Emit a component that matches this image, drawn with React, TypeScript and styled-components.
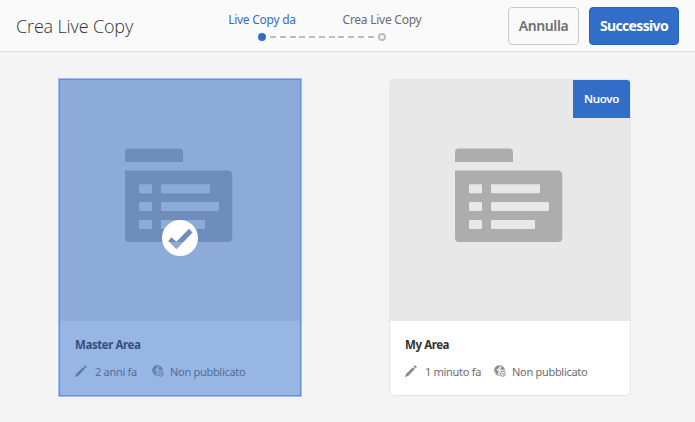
import React from "react";
import styled, { createGlobalStyle } from "styled-components";

const GlobalStyle = createGlobalStyle`
  *, *::before, *::after { box-sizing: border-box; }
  body { margin: 0; background: #f4f4f4; font-family: "Noto Sans", "Open Sans", sans-serif; overflow: hidden; }
`;

const Page = styled.div`
  width: 695px;
  height: 422px;
  background: #f4f4f4;
`;

const Header = styled.header`
  display: grid;
  grid-template-columns: 202px 240px 1fr;
  height: 52px;
  background: #fafafa;
  border-bottom: 1px solid #dcdcdc;
`;

const Title = styled.h1`
  margin: 0;
  padding: 13px 0 0 16px;
  font: 300 18px/27px "Open Sans", sans-serif;
  letter-spacing: -0.15px;
  color: #323232;
  white-space: nowrap;
`;

const Wizard = styled.ol`
  display: grid;
  grid-template-columns: 120px 120px;
  margin: 0;
  padding: 11px 0 0;
  list-style: none;
`;

const Step = styled.li<{ $active?: boolean }>`
  display: flex;
  flex-direction: column;
  align-items: center;
  font-size: 12px;
  line-height: 18px;
  letter-spacing: -0.25px;
  white-space: nowrap;
  color: ${(p) => (p.$active ? "#326ec8" : "#6b6b6b")};
`;

const StepTrack = styled.div`
  display: grid;
  grid-template-columns: 1fr 8px 1fr;
  align-items: center;
  width: 120px;
  height: 8px;
  margin-top: 4px;
`;

const Dot = styled.span<{ $active?: boolean }>`
  grid-column: 2;
  width: 8px;
  height: 8px;
  border-radius: 50%;
  border: 2px solid ${(p) => (p.$active ? "#326ec8" : "#bebebe")};
  background: ${(p) => (p.$active ? "#326ec8" : "#fafafa")};
`;

const Dashes = styled.span<{ $side: "before" | "after" }>`
  grid-row: 1;
  grid-column: ${(p) => (p.$side === "before" ? 1 : 3)};
  height: 2px;
  margin-left: ${(p) => (p.$side === "before" ? "0" : "4px")};
  margin-right: ${(p) => (p.$side === "before" ? "4px" : "0")};
  background: ${(p) =>
    p.$side === "before"
      ? "repeating-linear-gradient(90deg, #bebebe 0 2.85px, transparent 2.85px 6.62px, #bebebe 6.62px 9.77px)"
      : "repeating-linear-gradient(90deg, #bebebe 0 6px, transparent 6px 9.77px)"};
`;

const Actions = styled.div`
  display: flex;
  justify-content: flex-end;
  gap: 10px;
  padding: 7px 16px 0 0;
`;

const Button = styled.button<{ $primary?: boolean }>`
  width: ${(p) => (p.$primary ? "90px" : "71px")};
  height: 38px;
  padding: 0;
  border: 1px solid ${(p) => (p.$primary ? "#2763bd" : "#c8c8c8")};
  border-radius: 4px;
  background: ${(p) => (p.$primary ? "#326ec8" : "#fafafa")};
  color: ${(p) => (p.$primary ? "#fff" : "#707070")};
  font: ${(p) => (p.$primary ? 700 : 600)} 14px/20px "Noto Sans", sans-serif;
  letter-spacing: ${(p) => (p.$primary ? "-0.65px" : "-0.4px")};
`;

const Cards = styled.main`
  display: flex;
  gap: 88px;
  padding: 27px 0 0 59px;
`;

const Card = styled.article<{ $selected?: boolean }>`
  position: relative;
  width: 242px;
  height: 317px;
  border: 1px solid ${(p) => (p.$selected ? "#608fdf" : "#e6e6e6")};
  border-radius: ${(p) => (p.$selected ? "0" : "4px")};
  box-shadow: ${(p) => (p.$selected ? "0 0 0 1px #9fc0f7" : "none")};
  background: #fff;
  overflow: hidden;
`;

const Asset = styled.div`
  height: 241px;
  padding: 68px 0 0 65px;
  background: #e8e8e8;
`;

const Info = styled.div`
  padding: 15px 15px 0;
`;

const CardTitle = styled.h2`
  margin: 0;
  font-size: 11.5px;
  line-height: 18px;
  font-weight: 700;
  letter-spacing: -0.42px;
  color: #323232;
`;

const Properties = styled.div`
  display: flex;
  align-items: center;
  height: 18px;
  margin-top: 8px;
  font-size: 11px;
  line-height: 18px;
  letter-spacing: -0.3px;
  color: #6c6c6c;
  white-space: nowrap;
`;

const Modified = styled.span<{ $width: number }>`
  width: ${(p) => p.$width}px;
  margin-left: 8px;
  padding-top: 2px;
`;

const Status = styled.span`
  margin-left: 6px;
  padding-top: 2px;
`;

const Badge = styled.span`
  position: absolute;
  top: 0;
  right: 0;
  width: 57px;
  height: 38px;
  background: #326ec8;
  color: #fff;
  text-align: center;
  font-size: 11.5px;
  line-height: 37px;
  font-weight: 600;
  letter-spacing: -0.3px;
`;

const Selection = styled.div`
  position: absolute;
  inset: 0;
  padding: 140px 0 0 102px;
  background: rgba(50, 110, 200, 0.5);
`;

const Glyph = styled.svg`
  display: block;
  flex: none;
`;

const Folder = () => (
  <Glyph width="108" height="94" viewBox="0 0 108 94" fill="#adadad">
    <path d="M0 14V4.5Q0 .5 4 .5H54Q58 .5 58 4.5V14Z" />
    <path
      fillRule="evenodd"
      d="M0 22.5H102.5Q107.3 22.5 107.3 27.3V89.5Q107.3 94 102.8 94H4.5Q0 94 0 89.5Z
      M15 36.2h11q1 0 1 1v7q0 1-1 1H15q-1 0-1-1v-7q0-1 1-1Z
      M37 36.2h47q1 0 1 1v7q0 1-1 1H37q-1 0-1-1v-7q0-1 1-1Z
      M15 54h11q1 0 1 1v7q0 1-1 1H15q-1 0-1-1v-7q0-1 1-1Z
      M37 54h56q1 0 1 1v7q0 1-1 1H37q-1 0-1-1v-7q0-1 1-1Z
      M15 72h11q1 0 1 1v7q0 1-1 1H15q-1 0-1-1v-7q0-1 1-1Z
      M37 72h42q1 0 1 1v7q0 1-1 1H37q-1 0-1-1v-7q0-1 1-1Z"
    />
  </Glyph>
);

const Check = () => (
  <Glyph width="36" height="36" viewBox="0 0 36 36" fill="#fff">
    <path
      fillRule="evenodd"
      d="M18 0a18 18 0 1 0 0 36a18 18 0 1 0 0-36Z M6.2 21L9.4 17.2L14.4 21.7L27 8.8L30.6 12.5L14.5 29.3Z"
    />
  </Glyph>
);

const Pencil = () => (
  <Glyph width="12" height="12" viewBox="0 0 12 12" fill="#8c8c8c">
    <path d="M0 12L1.1 8.8L8 2.2L9.9 4.1L3.2 10.9Z M8.6 1.5L9.6.5Q10 .2 10.4.5L11.6 1.7Q11.9 2.1 11.6 2.5L10.6 3.5Z" />
  </Glyph>
);

const Globe = () => (
  <Glyph width="12" height="12" viewBox="0 0 12 12">
    <circle cx="5.5" cy="5.5" r="5" fill="#e4e4e4" stroke="#969696" strokeWidth=".8" />
    <path
      fill="#8c8c8c"
      d="M.5 5L1.2 2.8L3 1L5.2.6L5.7 2L4.6 2.6L4 3.8L2.4 4.4L3.7 5.8L4.6 6.7L3.9 8.2L3.6 10L1.8 8.8L2 7.2Z M7 1L9 2L10.3 4L9 5L7.3 4.7L6.5 3.5L7.5 2.5Z"
    />
    <circle cx="8.8" cy="8.8" r="3.2" fill="#fff" />
    <circle cx="8.8" cy="8.8" r="2.5" fill="none" stroke="#8c8c8c" />
    <path d="M7.7 7.7L9.9 9.9M9.9 7.7L7.7 9.9" stroke="#8c8c8c" strokeWidth=".7" />
  </Glyph>
);

interface AreaProps {
  title: string;
  modified: string;
  modifiedWidth: number;
  selected?: boolean;
  badge?: string;
}

const AreaCard = ({ title, modified, modifiedWidth, selected, badge }: AreaProps) => (
  <Card $selected={selected}>
    <Asset>
      <Folder />
    </Asset>
    <Info>
      <CardTitle>{title}</CardTitle>
      <Properties>
        <Pencil />
        <Modified $width={modifiedWidth}>{modified}</Modified>
        <Globe />
        <Status>Non pubblicato</Status>
      </Properties>
    </Info>
    {badge && <Badge>{badge}</Badge>}
    {selected && (
      <Selection>
        <Check />
      </Selection>
    )}
  </Card>
);

export default function App() {
  return (
    <Page>
      <GlobalStyle />
      <Header>
        <Title>Crea Live Copy</Title>
        <Wizard>
          <Step $active>
            Live Copy da
            <StepTrack>
              <Dot $active />
              <Dashes $side="after" />
            </StepTrack>
          </Step>
          <Step>
            Crea Live Copy
            <StepTrack>
              <Dashes $side="before" />
              <Dot />
            </StepTrack>
          </Step>
        </Wizard>
        <Actions>
          <Button>Annulla</Button>
          <Button $primary>Successivo</Button>
        </Actions>
      </Header>
      <Cards>
        <AreaCard title="Master Area" modified="2 anni fa" modifiedWidth={57} selected />
        <AreaCard title="My Area" modified="1 minuto fa" modifiedWidth={69} badge="Nuovo" />
      </Cards>
    </Page>
  );
}
